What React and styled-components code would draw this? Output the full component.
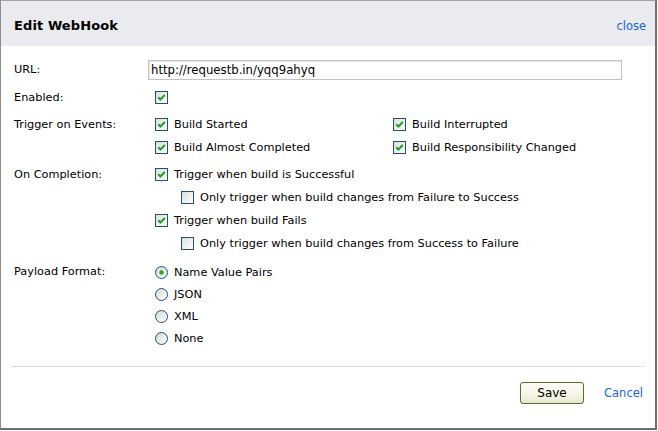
import React from "react";
import styled, { createGlobalStyle } from "styled-components";

const GlobalStyle = createGlobalStyle`
  html, body {
    margin: 0;
    padding: 0;
    background: #ffffff;
  }
  body {
    font-family: "DejaVu Sans", Verdana, sans-serif;
    font-size: 11.3px;
    color: #000;
  }
`;

const Dialog = styled.div`
  box-sizing: border-box;
  width: 657px;
  height: 430px;
  border-top: 1px solid #a3a3a3;
  border-left: 1px solid #8c8c8c;
  border-right: 2px solid #6f6f6f;
  border-bottom: 2px solid #6f6f6f;
  display: flex;
  flex-direction: column;
  background: #fff;
`;

const Header = styled.div`
  height: 45px;
  background: #e9ebef;
  display: flex;
  align-items: center;
  justify-content: space-between;
  padding: 3px 9px 0 13px;
  box-sizing: border-box;
`;

const Title = styled.h2`
  margin: 0;
  font-size: 13px;
  font-weight: bold;
  letter-spacing: 0.1px;
`;

const Link = styled.a`
  color: #1a67d1;
  text-decoration: none;
  font-size: 11.5px;
  cursor: pointer;
  margin-top: ${(p) => p.$offset || 0}px;
`;

const Body = styled.div`
  padding: 14px 13px 0;
  display: flex;
  flex-direction: column;
  gap: 4px;
`;

const Row = styled.div`
  display: grid;
  grid-template-columns: 134px 1fr;
  margin-bottom: ${(p) => p.$after || 0}px;
  margin-top: ${(p) => p.$before || 0}px;
`;

const Label = styled.div`
  line-height: ${(p) => p.$lh || 23}px;
`;

const TextInput = styled.input`
  box-sizing: border-box;
  width: 474px;
  height: 20px;
  border: 1px solid #c2c2c2;
  box-shadow: inset 1px 1px 2px #e4e4e4;
  padding: 0 2px;
  font-family: "DejaVu Sans", Verdana, sans-serif;
  font-size: 11.7px;
  color: #000;
  outline: none;
`;

const Options = styled.div`
  padding-left: 7px;
  display: grid;
  grid-template-columns: ${(p) => (p.$cols ? "238px 1fr" : "1fr")};
`;

const Option = styled.label`
  display: flex;
  align-items: center;
  height: ${(p) => p.$h || 23}px;
  padding-left: ${(p) => (p.$indent ? 26 : 0)}px;
  gap: 6px;
  white-space: nowrap;
`;

const Box = styled.svg`
  flex: none;
  display: block;
`;

function Check({ on }) {
  return (
    <Box width="13" height="13" viewBox="0 0 13 13">
      <defs>
        <linearGradient id="cbg" x1="0" y1="0" x2="1" y2="1">
          <stop offset="0" stopColor="#dcdcd6" />
          <stop offset="1" stopColor="#ffffff" />
        </linearGradient>
      </defs>
      <rect x="0.5" y="0.5" width="12" height="12" fill="url(#cbg)" stroke="#1c5180" />
      {on && (
        <path
          d="M3.2 6.2 L5.4 8.4 L9.8 4"
          fill="none"
          stroke="#21a121"
          strokeWidth="2.1"
        />
      )}
    </Box>
  );
}

function Radio({ on }) {
  return (
    <Box width="13" height="13" viewBox="0 0 13 13">
      <defs>
        <linearGradient id="rbg" x1="0" y1="0" x2="1" y2="1">
          <stop offset="0" stopColor="#d6d6cf" />
          <stop offset="1" stopColor="#ffffff" />
        </linearGradient>
      </defs>
      <circle cx="6.5" cy="6.5" r="6" fill="url(#rbg)" stroke="#1c5180" />
      {on && <circle cx="6.5" cy="6.5" r="2.2" fill="#2aa52a" />}
    </Box>
  );
}

const Footer = styled.div`
  margin: auto 11px 0;
  border-top: 1px dotted #c4c4c4;
  padding: 15px 1px 24px 0;
  display: flex;
  justify-content: flex-end;
  align-items: center;
  gap: 20px;
`;

const SaveButton = styled.button`
  box-sizing: border-box;
  width: 64px;
  height: 22px;
  border: 1px solid #56702a;
  border-radius: 3px;
  background: linear-gradient(#fefef8, #f4f2e4 70%, #e6e3cf);
  font-family: "DejaVu Sans", Verdana, sans-serif;
  font-size: 12px;
  color: #000;
  padding: 0;
`;

const events = [
  "Build Started",
  "Build Interrupted",
  "Build Almost Completed",
  "Build Responsibility Changed",
];

const formats = ["Name Value Pairs", "JSON", "XML", "None"];

export default function App() {
  return (
    <>
      <GlobalStyle />
      <Dialog>
        <Header>
          <Title>Edit WebHook</Title>
          <Link $offset={2}>close</Link>
        </Header>
        <Body>
          <Row $after={2}>
            <Label $lh={20}>URL:</Label>
            <TextInput defaultValue="http://requestb.in/yqq9ahyq" />
          </Row>
          <Row>
            <Label>Enabled:</Label>
            <Options>
              <Option>
                <Check on />
              </Option>
            </Options>
          </Row>
          <Row>
            <Label>Trigger on Events:</Label>
            <Options $cols>
              {events.map((e) => (
                <Option key={e}>
                  <Check on />
                  {e}
                </Option>
              ))}
            </Options>
          </Row>
          <Row>
            <Label>On Completion:</Label>
            <Options>
              <Option>
                <Check on />
                Trigger when build is Successful
              </Option>
              <Option $indent>
                <Check />
                Only trigger when build changes from Failure to Success
              </Option>
              <Option>
                <Check on />
                Trigger when build Fails
              </Option>
              <Option $indent>
                <Check />
                Only trigger when build changes from Success to Failure
              </Option>
            </Options>
          </Row>
          <Row $before={2}>
            <Label $lh={22}>Payload Format:</Label>
            <Options>
              {formats.map((f, i) => (
                <Option key={f} $h={22}>
                  <Radio on={i === 0} />
                  {f}
                </Option>
              ))}
            </Options>
          </Row>
        </Body>
        <Footer>
          <SaveButton>Save</SaveButton>
          <Link>Cancel</Link>
        </Footer>
      </Dialog>
    </>
  );
}
